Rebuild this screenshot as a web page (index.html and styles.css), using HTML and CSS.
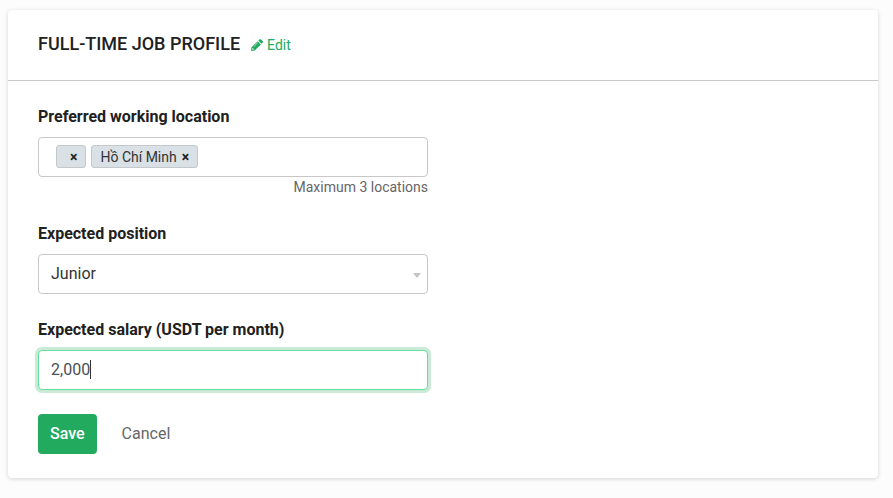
FILE: index.html
```html
<!DOCTYPE html>
<html lang="en">
<head>
<meta charset="utf-8">
<meta name="viewport" content="width=device-width, initial-scale=1">
<title>Full-time job profile</title>
<link rel="stylesheet" href="styles.css">
</head>
<body>
<main class="card">
  <header class="card-header">
    <h1 class="card-title">FULL-TIME JOB PROFILE</h1>
    <a class="edit-link" href="#">
      <svg class="edit-icon" viewBox="0 0 12 12" aria-hidden="true"><path fill="currentColor" fill-rule="evenodd" d="M8.5.4a1.1 1.1 0 0 1 1.500 0l1.700 1.700a1.100 1.100 0 0 1 0 1.500l-1.200 1.200-3.200-3.200zM6.700 2.200l3.200 3.200-6.200 6.200L0 12l.4-3.600zM1.400 9.300l-.2 1.500 1.500-.2.3-.3-1.300-1.300zM6.600 3.500 2.700 7.400l.3.3 3.900-3.900z"/></svg>
      Edit
    </a>
  </header>
  <form class="card-body">
    <div class="field">
      <span class="label" id="location-label">Preferred working location</span>
      <div class="control tags" role="group" aria-labelledby="location-label">
        <span class="tag"><button class="tag-remove" type="button">×</button></span>
        <span class="tag">Hồ Chí Minh<button class="tag-remove" type="button">×</button></span>
      </div>
      <p class="hint">Maximum 3 locations</p>
    </div>
    <div class="field">
      <label class="label" for="position">Expected position</label>
      <div class="select-wrap">
        <select class="control select" id="position"><option>Junior</option></select>
        <svg class="arrow" viewBox="0 0 8 5" aria-hidden="true"><path fill="#c4c4c4" d="M0 0h8L4 5z"/></svg>
      </div>
    </div>
    <div class="field">
      <label class="label" for="salary">Expected salary (USDT per month)</label>
      <div class="input-wrap">
        <input class="control input" id="salary" type="text" value="2,000">
        <span class="caret" aria-hidden="true"></span>
      </div>
    </div>
    <div class="actions">
      <button class="button save" type="submit">Save</button>
      <button class="button cancel" type="button">Cancel</button>
    </div>
  </form>
</main>
</body>
</html>
```
FILE: styles.css
```css
* {
  box-sizing: border-box;
}

body {
  margin: 0;
  padding: 10px 15px 20px 8px;
  background: #fcfcfc;
  color: #212529;
  font: 16px/24px Roboto, sans-serif;
}

.card {
  background: #fff;
  border-radius: 4px;
  box-shadow: 0 1px 4px rgba(0, 0, 0, 0.16);
}

.card-header {
  display: flex;
  align-items: baseline;
  gap: 11px;
  padding: 20px 30px 23px;
  border-bottom: 1px solid #c8c8c8;
}

.card-title {
  margin: 0;
  font-size: 18px;
  line-height: 27px;
  font-weight: 500;
  color: #212121;
}

.edit-link {
  display: inline-flex;
  align-items: baseline;
  gap: 4px;
  color: #22ab5f;
  font-size: 14px;
  line-height: 20px;
  text-decoration: none;
}

.edit-icon {
  width: 12px;
  height: 12px;
  align-self: center;
}

.card-body {
  display: flex;
  flex-direction: column;
  gap: 24px;
  padding: 24px 30px;
}

.field {
  width: 100%;
  max-width: 390px;
}

.label {
  display: block;
  margin-bottom: 8px;
  font-weight: 700;
  color: #212121;
}

.control {
  display: block;
  width: 100%;
  height: 40px;
  border: 1px solid #c8c8c8;
  border-radius: 4px;
  background: #fff;
  font: inherit;
  outline: none;
}

.tags {
  display: flex;
  align-items: flex-start;
  gap: 5px;
  padding: 7px 17px;
}

.tag {
  display: inline-flex;
  align-items: center;
  height: 23px;
  padding: 0 8px;
  border: 1px solid #c3c8cb;
  border-radius: 3px;
  background: #d9e1e6;
  color: #333;
  font-size: 14px;
}

.tag-remove {
  margin: 0 0 0 5px;
  padding: 0;
  border: 0;
  background: none;
  color: #212121;
  font: 700 14px/20px Roboto, sans-serif;
}

.hint {
  margin: 0;
  color: #666;
  font-size: 14px;
  line-height: 21px;
  text-align: right;
}

.select-wrap,
.input-wrap {
  position: relative;
}

.select {
  appearance: none;
  padding: 0 24px 0 12px;
  color: #333;
}

.arrow {
  position: absolute;
  top: 19px;
  right: 7px;
  width: 8px;
  height: 5px;
  pointer-events: none;
}

.input {
  padding: 0 12px 2px;
  border-color: #67dd9b;
  color: #495057;
  box-shadow: 0 0 0 3px #c8ead7;
}

.caret {
  position: absolute;
  top: 10px;
  left: 52px;
  width: 1px;
  height: 19px;
  background: #333;
}

.actions {
  display: flex;
  gap: 13px;
}

.button {
  height: 40px;
  padding: 0 12px;
  border: 0;
  border-radius: 4px;
  background: none;
  font: inherit;
}

.save {
  background: #22ab5f;
  color: #fff;
  font-weight: 500;
}

.cancel {
  color: #666;
}
```
